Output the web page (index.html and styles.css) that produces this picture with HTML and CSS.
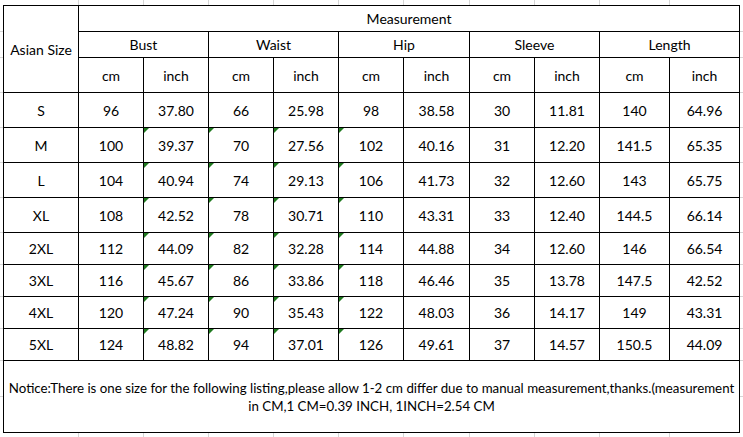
FILE: index.html
```html
<!DOCTYPE html>
<html>
<head>
<meta charset="utf-8">
<link rel="stylesheet" href="styles.css">
</head>
<body>
<div class="sheet">
<table class="size-table">
  <colgroup>
    <col class="c-size">
    <col class="c65"><col class="c65">
    <col class="c65"><col class="c65">
    <col class="c65"><col class="c66">
    <col class="c65"><col class="c65">
    <col class="c70"><col class="c70">
  </colgroup>
  <tr class="r26">
    <td rowspan="3">Asian Size</td>
    <td colspan="10">Measurement</td>
  </tr>
  <tr class="r26">
    <td colspan="2">Bust</td>
    <td colspan="2">Waist</td>
    <td colspan="2">Hip</td>
    <td colspan="2">Sleeve</td>
    <td colspan="2">Length</td>
  </tr>
  <tr class="r35">
    <td>cm</td><td>inch</td><td>cm</td><td>inch</td><td>cm</td><td>inch</td><td>cm</td><td>inch</td><td>cm</td><td>inch</td>
  </tr>
  <tr class="r35">
    <td>S</td><td>96</td><td>37.80</td><td>66</td><td>25.98</td><td>98</td><td>38.58</td><td>30</td><td>11.81</td><td>140</td><td>64.96</td>
  </tr>
  <tr class="r35">
    <td>M</td><td>100</td><td class="t">39.37</td><td class="t">70</td><td class="t">27.56</td><td class="t">102</td><td>40.16</td><td>31</td><td>12.20</td><td>141.5</td><td>65.35</td>
  </tr>
  <tr class="r35">
    <td>L</td><td>104</td><td class="t">40.94</td><td class="t">74</td><td class="t">29.13</td><td class="t">106</td><td>41.73</td><td>32</td><td>12.60</td><td>143</td><td>65.75</td>
  </tr>
  <tr class="r35">
    <td>XL</td><td>108</td><td class="t">42.52</td><td class="t">78</td><td class="t">30.71</td><td class="t">110</td><td>43.31</td><td>33</td><td>12.40</td><td>144.5</td><td>66.14</td>
  </tr>
  <tr class="r32">
    <td>2XL</td><td>112</td><td class="t">44.09</td><td class="t">82</td><td class="t">32.28</td><td class="t">114</td><td>44.88</td><td>34</td><td>12.60</td><td>146</td><td>66.54</td>
  </tr>
  <tr class="r32">
    <td>3XL</td><td>116</td><td class="t">45.67</td><td class="t">86</td><td class="t">33.86</td><td class="t">118</td><td>46.46</td><td>35</td><td>13.78</td><td>147.5</td><td>42.52</td>
  </tr>
  <tr class="r32">
    <td>4XL</td><td>120</td><td class="t">47.24</td><td class="t">90</td><td class="t">35.43</td><td class="t">122</td><td>48.03</td><td>36</td><td>14.17</td><td>149</td><td>43.31</td>
  </tr>
  <tr class="r32">
    <td>5XL</td><td>124</td><td class="t">48.82</td><td class="t">94</td><td class="t">37.01</td><td class="t">126</td><td>49.61</td><td>37</td><td>14.57</td><td>150.5</td><td>44.09</td>
  </tr>
  <tr class="r72">
    <td colspan="11" class="notice">Notice:There is one size for the following listing,please allow 1-2 cm differ due to manual measurement,thanks.(measurement in CM,1 CM=0.39 INCH, 1INCH=2.54 CM</td>
  </tr>
</table>
</div>
</body>
</html>
```

FILE: styles.css
```css
html, body {
  margin: 0;
  padding: 0;
  background: #ffffff;
}

/* Spreadsheet canvas with faint Excel gridlines showing around the table */
.sheet {
  padding: 5px 0 0 3px;
  width: 743px;
  height: 437px;
  box-sizing: border-box;
  overflow: hidden;
  --g: linear-gradient(#d6d6d6, #d6d6d6);
  background:
    var(--g) 78px 0 / 1px 100% no-repeat,
    var(--g) 143px 0 / 1px 100% no-repeat,
    var(--g) 208px 0 / 1px 100% no-repeat,
    var(--g) 273px 0 / 1px 100% no-repeat,
    var(--g) 338px 0 / 1px 100% no-repeat,
    var(--g) 403px 0 / 1px 100% no-repeat,
    var(--g) 469px 0 / 1px 100% no-repeat,
    var(--g) 534px 0 / 1px 100% no-repeat,
    var(--g) 599px 0 / 1px 100% no-repeat,
    var(--g) 669px 0 / 1px 100% no-repeat,
    var(--g) 0 31px / 100% 1px no-repeat,
    var(--g) 0 57px / 100% 1px no-repeat,
    var(--g) 0 92px / 100% 1px no-repeat,
    var(--g) 0 127px / 100% 1px no-repeat,
    var(--g) 0 162px / 100% 1px no-repeat,
    var(--g) 0 197px / 100% 1px no-repeat,
    var(--g) 0 232px / 100% 1px no-repeat,
    var(--g) 0 264px / 100% 1px no-repeat,
    var(--g) 0 296px / 100% 1px no-repeat,
    var(--g) 0 328px / 100% 1px no-repeat,
    var(--g) 0 360px / 100% 1px no-repeat,
    var(--g) 0 396px / 100% 1px no-repeat,
    #ffffff;
}

.size-table {
  border-collapse: collapse;
  table-layout: fixed;
  width: 736px;
  background: #ffffff;
  font-family: Lato, "Liberation Sans", Arial, sans-serif;
  font-size: 14px;
  color: #000000;
}

.c-size { width: 75px; }
.c65 { width: 65px; }
.c66 { width: 66px; }
.c70 { width: 70px; }

.size-table td {
  border: 1px solid #000000;
  text-align: center;
  vertical-align: middle;
  padding: 0;
  position: relative;
  white-space: nowrap;
}

.r26 { height: 26px; }
.r32 { height: 32px; }
.r35 { height: 35px; }
.r72 { height: 72px; }

.size-table td.notice {
  white-space: normal;
  font-size: 13.3px;
  line-height: 18px;
  padding: 0;
}

.size-table td.t::before {
  content: "";
  position: absolute;
  left: 0;
  top: 0;
  width: 0;
  height: 0;
  border-top: 5px solid #1f7a1f;
  border-right: 5px solid transparent;
}
```
